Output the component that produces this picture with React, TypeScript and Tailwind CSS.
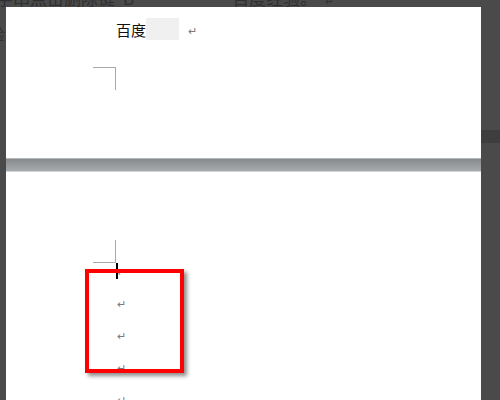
import React from "react";

const cjk = { fontFamily: '"Noto Sans CJK SC", "Noto Sans", sans-serif' };

function Ret({ className = "" }: { className?: string }) {
  return (
    <span className={`text-[11px] leading-none text-[#7a7a7a] ${className}`} style={cjk}>
      ↵
    </span>
  );
}

export default function App() {
  const lines = [0, 1, 2, 3];
  return (
    <div className="relative w-[500px] h-[400px] overflow-hidden bg-[#4a4a4a]" style={cjk}>
      {/* top strip with clipped background text */}
      <div className="h-[7px] shrink-0 overflow-hidden flex">
        <div className="-mt-[11px] ml-[-4px] text-[17px] leading-[17px] text-[#2f2f2f] whitespace-nowrap">
          字串点击删除键"B
        </div>
        <div className="-mt-[11px] ml-[98px] text-[17px] leading-[17px] text-[#2f2f2f] whitespace-nowrap">
          百度经验。<span className="text-[10px] ml-2">↵</span>
        </div>
      </div>
      <div className="flex h-[393px] overflow-hidden">
        {/* left sliver */}
        <div className="w-[6px] shrink-0 overflow-hidden">
          <div className="mt-[19px] -ml-[10px] text-[15px] leading-[15px] text-[#343434]">验</div>
        </div>
        {/* pages */}
        <div className="w-[475px] shrink-0 flex flex-col">
          <div className="h-[151px] shrink-0 bg-white flex flex-col">
            <div className="mt-[11px] ml-[110px] flex items-center h-[22px]">
              <span className="text-[15px] leading-none text-[#111]">百度</span>
              <span className="w-[33px] h-[22px] bg-[#f0f0f0]" />
              <Ret className="ml-[9px] mt-[2px]" />
            </div>
            <div className="mt-[27px] ml-[87px] w-[23px] h-[23px] border-t border-r border-[#a8a8a8]" />
          </div>
          <div className="h-[14px] shrink-0 flex flex-col">
            <div className="h-px bg-[#b4b7b9]" />
            <div className="flex-1 bg-gradient-to-b from-[#878b8d] to-[#a6aaac]" />
            <div className="h-px bg-[#d3d5d6]" />
          </div>
          <div className="flex-1 min-h-0 overflow-hidden bg-white relative">
            <div className="mt-[68px] ml-[87px] w-[23px] h-[23px] border-b border-r border-[#a8a8a8]" />
            <div className="ml-[110px] flex flex-col">
              <div className="h-[16px] flex items-start">
                <span className="w-[2px] h-[16px] bg-black" />
                <Ret className="mt-[3px] -ml-px" />
              </div>
              {lines.map((i) => (
                <div key={i} className="h-[32px] flex items-end pl-[1px]">
                  <Ret className="mb-[2px]" />
                </div>
              ))}
            </div>
            <div className="absolute left-[79px] top-[97px] w-[99px] h-[104px] border-[4px] border-[#ff0000] shadow-[3px_3px_4px_rgba(0,0,0,0.45)]" />
          </div>
        </div>
        {/* right strip */}
        <div className="flex-1 flex flex-col">
          <div className="h-[123px]" />
          <div className="h-[13px] bg-[#3e3e3e]" />
        </div>
      </div>
    </div>
  );
}
